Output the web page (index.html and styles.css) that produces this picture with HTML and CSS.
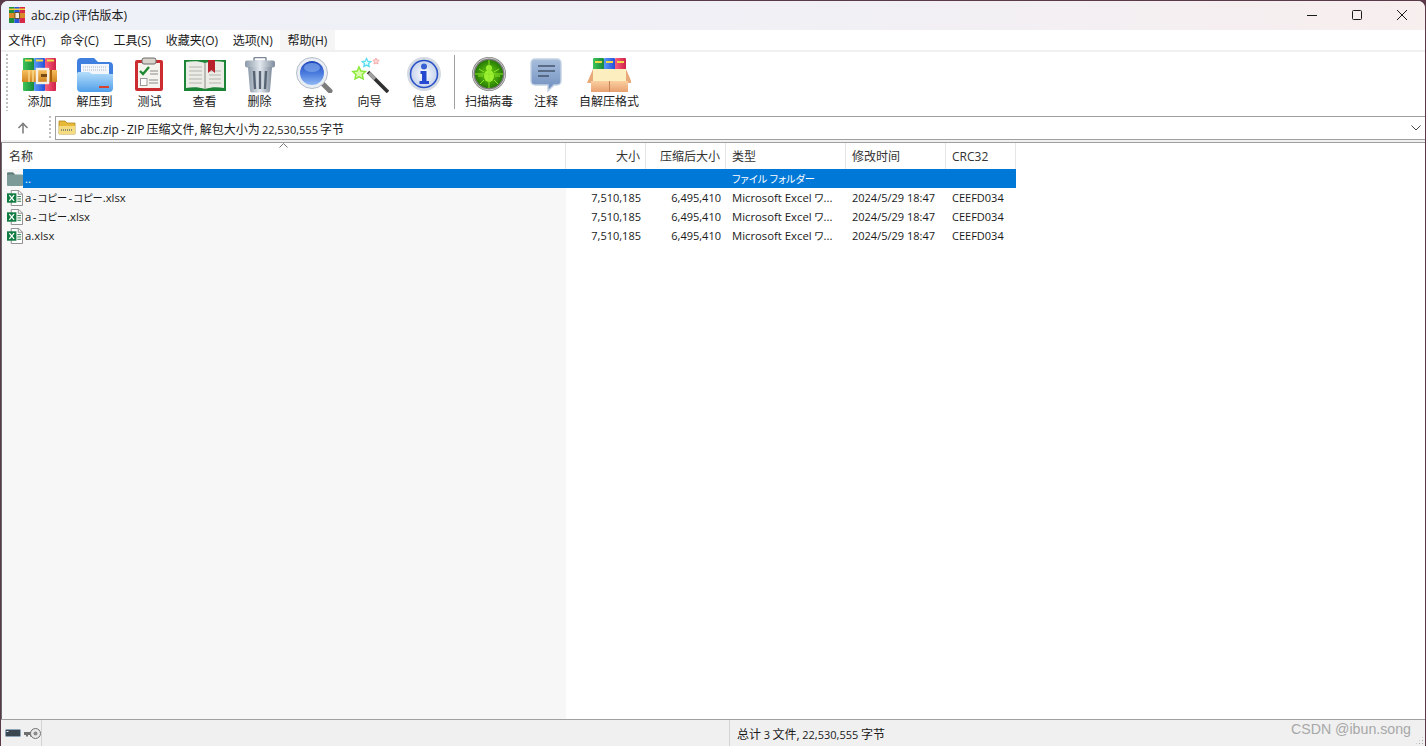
FILE: index.html
```html
<!DOCTYPE html>
<html lang="zh">

<head>
    <meta charset="UTF-8">
    <meta name="viewport" content="width=device-width, initial-scale=1.0">
    <title>abc.zip (评估版本)</title>
    <link rel="stylesheet" href="styles.css">
</head>

<body>
    <!-- shared gradients for the toolbar icons -->
    <svg class="svg-defs" aria-hidden="true">
        <defs>
            <linearGradient id="g-green" x1="0" x2="1" y1="0" y2="0"><stop offset="0" stop-color="#3cc45a"/><stop offset="1" stop-color="#1a8a3c"/></linearGradient>
            <linearGradient id="g-blue" x1="0" x2="1" y1="0" y2="0"><stop offset="0" stop-color="#5a9af8"/><stop offset="1" stop-color="#2450d8"/></linearGradient>
            <linearGradient id="g-red" x1="0" x2="1" y1="0" y2="0"><stop offset="0" stop-color="#f86080"/><stop offset="1" stop-color="#d02048"/></linearGradient>
            <linearGradient id="g-belt" x1="0" x2="0" y1="0" y2="1"><stop offset="0" stop-color="#f9c060"/><stop offset="1" stop-color="#d08420"/></linearGradient>
            <linearGradient id="g-folder" x1="0" x2="0" y1="0" y2="1"><stop offset="0" stop-color="#b4defa"/><stop offset="1" stop-color="#4f9eea"/></linearGradient>
            <linearGradient id="g-steel" x1="0" x2="1" y1="0" y2="0"><stop offset="0" stop-color="#8b99a8"/><stop offset=".5" stop-color="#e2e8ee"/><stop offset="1" stop-color="#7f8c9c"/></linearGradient>
            <linearGradient id="g-lens" x1="0" x2="0" y1="0" y2="1"><stop offset="0" stop-color="#1f45b8"/><stop offset=".55" stop-color="#4f80e0"/><stop offset="1" stop-color="#8fb8f4"/></linearGradient>
            <linearGradient id="g-bubble" x1="0" x2="0" y1="0" y2="1"><stop offset="0" stop-color="#a8bedc"/><stop offset="1" stop-color="#6f8fc0"/></linearGradient>
            <linearGradient id="g-box" x1="0" x2="0" y1="0" y2="1"><stop offset="0" stop-color="#fbcfa0"/><stop offset="1" stop-color="#e8a070"/></linearGradient>
            <radialGradient id="g-virus"><stop offset="0" stop-color="#6ed80e"/><stop offset="1" stop-color="#267a06"/></radialGradient>
            <radialGradient id="g-info"><stop offset="0" stop-color="#ffffff"/><stop offset="1" stop-color="#c4d2ec"/></radialGradient>
        </defs>
    </svg>

    <div class="window">
        <div class="titlebar">
            <svg class="title-icon" width="16" height="16" viewBox="0 0 16 16">
                <rect x="0" y="0" width="5.4" height="16" fill="#1f8f3c"/>
                <rect x="5.4" y="0" width="5.2" height="16" fill="#2a55d8"/>
                <rect x="10.6" y="0" width="5.4" height="16" fill="#d8284a"/>
                <rect x="0" y="1.5" width="16" height="1.5" fill="#f0d040"/>
                <rect x="0" y="6" width="16" height="5" fill="#d88a28"/>
                <rect x="6" y="5.5" width="4.5" height="6" fill="#f4ead8" stroke="#5a3a14" stroke-width=".8"/>
            </svg>
            <span class="title-text">abc.zip (评估版本)</span>
            <div class="window-btns">
                <svg width="12" height="12" viewBox="0 0 12 12"><path d="M1 6.500h10" stroke="#1a1a1a" fill="none"/></svg>
                <svg width="12" height="12" viewBox="0 0 12 12"><rect x="1.500" y="1.500" width="9" height="9" rx="1" stroke="#1a1a1a" fill="none"/></svg>
                <svg width="12" height="12" viewBox="0 0 12 12"><path d="M1 1l10 10M11 1L1 11" stroke="#1a1a1a" fill="none"/></svg>
            </div>
        </div>

        <div class="menubar">
            <a>文件(F)</a>
            <a>命令(C)</a>
            <a>工具(S)</a>
            <a>收藏夹(O)</a>
            <a>选项(N)</a>
            <a class="menu-active">帮助(H)</a>
        </div>

        <div class="toolbar">
            <div class="grip"></div>
            <div class="tool">
                <svg width="36" height="36" viewBox="0 0 36 36">
                    <rect x="1" y="1" width="11" height="33" rx="1" fill="url(#g-green)"/>
                    <rect x="12" y="1" width="11" height="33" rx="1" fill="url(#g-blue)"/>
                    <rect x="23" y="1" width="11" height="33" rx="1" fill="url(#g-red)"/>
                    <path d="M3 3.500h7M14 3.500h7M25 3.500h7" stroke="#f0d848" stroke-width="2"/>
                    <rect x="0" y="13" width="35" height="12" fill="url(#g-belt)"/>
                    <path d="M7 13v12M11 13v12" stroke="#f9dc90" stroke-width="1.400"/>
                    <rect x="15" y="12" width="11" height="14" fill="none" stroke="#f6f0e4" stroke-width="2.400"/>
                    <rect x="19" y="17" width="6" height="3" fill="#7a4a14"/>
                    <rect x="28" y="13" width="2" height="12" fill="#a8620f"/>
                </svg>
                <span>添加</span>
            </div>
            <div class="tool">
                <svg width="36" height="36" viewBox="0 0 36 36">
                    <path d="M0 5a4 4 0 0 1 4-4h13l4 4h11a4 4 0 0 1 4 4v12H0z" fill="#3f7fe0"/>
                    <rect x="4" y="7" width="28" height="14" fill="#f2f5fa"/>
                    <path d="M6 10h24M6 13h24" stroke="#a8b8cc" stroke-dasharray="1 1"/>
                    <path d="M0 17c0-1.500 1-2 2-2h10l3 2h21v14a4 4 0 0 1-4 4H4a4 4 0 0 1-4-4z" fill="url(#g-folder)"/>
                    <rect x="22" y="29" width="10" height="2" fill="#d84030"/>
                </svg>
                <span>解压到</span>
            </div>
            <div class="tool">
                <svg width="30" height="36" viewBox="0 0 30 36">
                    <rect x="0" y="3" width="28" height="31" rx="2" fill="#cc2c30"/>
                    <rect x="3" y="6" width="22" height="25" fill="#f6f4ee"/>
                    <rect x="7" y="1" width="14" height="6" rx="2" fill="#d8d4cc" stroke="#6a6a6a"/>
                    <path d="M5 14l3 3 6-7" stroke="#1f8a30" stroke-width="2.400" fill="none"/>
                    <path d="M15 14h8M15 17h8M14 23h9M14 26h9" stroke="#8a8a8a"/>
                    <rect x="5.500" y="21.500" width="6.500" height="7" fill="#fff" stroke="#9a9a9a"/>
                </svg>
                <span>测试</span>
            </div>
            <div class="tool">
                <svg width="42" height="36" viewBox="0 0 42 36">
                    <rect x="0" y="3" width="42" height="31" fill="#1c8436"/>
                    <path d="M2 5c6-1 13-1 19 1c6-2 13-2 19-1v26c-6-1-13-1-19 1c-6-2-13-2-19-1z" fill="#ecece6"/>
                    <path d="M5 10h13M5 14h13M5 18h13M5 22h13M5 26h13M25 14h12M25 18h12M25 22h12M25 26h12" stroke="#b4b4ae" stroke-width="1.200"/>
                    <path d="M21 6v26" stroke="#8a8a84"/>
                    <path d="M24 3h7v13l-3.500-3-3.500 3z" fill="#b8202c"/>
                </svg>
                <span>查看</span>
            </div>
            <div class="tool">
                <svg width="30" height="36" viewBox="0 0 30 36">
                    <rect x="9" y="0.500" width="12" height="4" rx="1" fill="none" stroke="#7a8898" stroke-width="1.400"/>
                    <rect x="0" y="3.500" width="30" height="7" rx="2" fill="url(#g-steel)"/>
                    <path d="M3 10h24l-2 24a2 2 0 0 1-2 1.500H7a2 2 0 0 1-2-1.500z" fill="url(#g-steel)"/>
                    <path d="M9 14l1 18M15 14v18M21 14l-1 18" stroke="#566474" stroke-width="2.400"/>
                </svg>
                <span>删除</span>
            </div>
            <div class="tool">
                <svg width="38" height="36" viewBox="0 0 38 36">
                    <path d="M24 24l10 10" stroke="#7c7c7c" stroke-width="5" stroke-linecap="round"/>
                    <circle cx="16" cy="16" r="15.500" fill="#e8eef4" stroke="#b4bec8"/>
                    <circle cx="16" cy="16" r="12" fill="url(#g-lens)"/>
                    <ellipse cx="16" cy="10.500" rx="8" ry="4.500" fill="#7ea8ec" opacity=".7"/>
                </svg>
                <span>查找</span>
            </div>
            <div class="tool">
                <svg width="38" height="36" viewBox="0 0 38 36">
                    <path d="M17 15l20 20" stroke="#303030" stroke-width="3.600"/>
                    <path d="M18 16l6 6" stroke="#a0a0a0" stroke-width="3.200"/>
                    <path d="M8 10l2 4 4.500.5-3.200 3 .9 4.500L8 19.800 4 22l.9-4.500-3.200-3 4.500-.5z" fill="#d8fca8" stroke="#86e838" stroke-width="1.400"/>
                    <path d="M15.500 1.500l1.300 2.700 3 .4-2.200 2 .6 3-2.700-1.500-2.700 1.500.6-3-2.200-2 3-.4z" fill="#e4fdff" stroke="#58dcf0" stroke-width="1.300"/>
                    <path d="M25 1l1 2 2.200.3-1.600 1.500.4 2.200-2-1-2 1 .4-2.200-1.600-1.500 2.200-.3z" fill="#fbd8d8" stroke="#f4acac"/>
                </svg>
                <span>向导</span>
            </div>
            <div class="tool">
                <svg width="36" height="36" viewBox="0 0 36 36">
                    <circle cx="17" cy="17" r="17" fill="#d4dae2"/>
                    <circle cx="17" cy="17" r="13.500" fill="url(#g-info)" stroke="#2a50c8" stroke-width="1.600"/>
                    <circle cx="17" cy="9.500" r="3" fill="#3a62d4"/>
                    <path d="M13.500 14h6v10H22v3h-9.500v-3H15v-7h-1.500z" fill="#2448d0"/>
                </svg>
                <span>信息</span>
            </div>
            <div class="tool-sep"></div>
            <div class="tool tool-wide">
                <svg width="36" height="36" viewBox="0 0 36 36">
                    <circle cx="18" cy="17" r="17" fill="#7c7c7c"/>
                    <circle cx="18" cy="17" r="16" fill="none" stroke="#d0d0d0"/>
                    <circle cx="18" cy="17" r="14" fill="url(#g-virus)"/>
                    <ellipse cx="18" cy="19" rx="5" ry="6" fill="#9cf030"/>
                    <circle cx="18" cy="11" r="3" fill="#9cf030"/>
                    <path d="M13 15l-5-3M23 15l5-3M12 19H7M24 19h5M13 23l-4 4M23 23l4 4M18 3v28M4 17h28" stroke="#8ce428" stroke-width="1"/>
                </svg>
                <span>扫描病毒</span>
            </div>
            <div class="tool tool-note">
                <svg width="32" height="36" viewBox="0 0 32 36">
                    <path d="M5 2h22a4 4 0 0 1 4 4v18a4 4 0 0 1-4 4h-3l-6 6v-6H5a4 4 0 0 1-4-4V6a4 4 0 0 1 4-4z" fill="url(#g-bubble)" stroke="#c4d2e4" stroke-width="1.400"/>
                    <path d="M8 9h17M8 14h17M8 19h11" stroke="#46566c" stroke-width="1.600"/>
                </svg>
                <span>注释</span>
            </div>
            <div class="tool tool-sfx">
                <svg width="44" height="36" viewBox="0 0 44 36">
                    <rect x="6" y="1" width="11" height="14" rx="1" fill="url(#g-green)"/>
                    <rect x="17" y="1" width="11" height="14" rx="1" fill="url(#g-blue)"/>
                    <rect x="28" y="1" width="11" height="14" rx="1" fill="url(#g-red)"/>
                    <path d="M8 5h7M19 5h7M30 5h7" stroke="#f0d848" stroke-width="2"/>
                    <rect x="6" y="12" width="33" height="12" fill="#fdeec0"/>
                    <path d="M6 12L0 26h6z M39 12l6 14h-6z" fill="#e8a878"/>
                    <rect x="4" y="24" width="37" height="11" fill="url(#g-box)"/>
                    <path d="M22.500 24v11" stroke="#c88254"/>
                </svg>
                <span>自解压格式</span>
            </div>
        </div>

        <div class="addressbar">
            <div class="up-btn">
                <svg width="12" height="12" viewBox="0 0 12 12"><path d="M6 11.500V1.500M1.500 6L6 1.500 10.500 6" stroke="#808080" stroke-width="1.600" fill="none"/></svg>
            </div>
            <div class="grip grip-small"></div>
            <div class="address-box">
                <svg width="18" height="16" viewBox="0 0 18 16">
                    <path d="M1 1h6l2 2h8v11H1z" fill="#e8b838" stroke="#b08820" stroke-width=".8"/>
                    <rect x="1" y="6" width="16" height="8" fill="#f6dc80"/>
                    <path d="M3 10h12" stroke="#8a8a7a" stroke-width="2" stroke-dasharray="1 1"/>
                </svg>
                <span class="address-text">abc.zip - ZIP 压缩文件, 解包大小为 <span class="digits">22,530,555</span> 字节</span>
                <svg class="chevron" width="10" height="6" viewBox="0 0 10 6"><path d="M.5.500L5 5 9.500.500" stroke="#444" fill="none"/></svg>
            </div>
        </div>

        <div class="list">
            <div class="row list-head">
                <div class="col col-name">名称<svg class="sort-mark" width="9" height="5" viewBox="0 0 9 5"><path d="M.5 4.500L4.500.5l4 4" stroke="#777" fill="none"/></svg></div>
                <div class="col col-num">大小</div>
                <div class="col col-num">压缩后大小</div>
                <div class="col col-type">类型</div>
                <div class="col col-time">修改时间</div>
                <div class="col col-crc">CRC32</div>
            </div>
            <div class="row row-selected">
                <div class="col col-name">
                    <svg class="file-icon" width="16" height="14" viewBox="0 0 16 14"><path d="M0 1.500A1 1 0 0 1 1 .5h5l2 2h7a1 1 0 0 1 1 1V13a1 1 0 0 1-1 1H1a1 1 0 0 1-1-1z" fill="#7b9a98"/><path d="M0 1.500A1 1 0 0 1 1 .5h5l2 2H0z" fill="#5f7a78"/></svg>
                    <span>..</span>
                </div>
                <div class="col col-num"></div>
                <div class="col col-num"></div>
                <div class="col col-type"><span class="kana">ファイル フォルダー</span></div>
                <div class="col col-time"></div>
                <div class="col col-crc"></div>
            </div>
            <div class="row">
                <div class="col col-name">
                    <svg class="file-icon" width="16" height="16" viewBox="0 0 17 17"><use href="#xls-icon"/></svg>
                    <span class="file-name">a - <span class="kana">コピー</span> - <span class="kana">コピー</span>.xlsx</span>
                </div>
                <div class="col col-num">7,510,185</div>
                <div class="col col-num">6,495,410</div>
                <div class="col col-type">Microsoft Excel <span class="kana">ワ</span>...</div>
                <div class="col col-time">2024/5/29 18:47</div>
                <div class="col col-crc">CEEFD034</div>
            </div>
            <div class="row">
                <div class="col col-name">
                    <svg class="file-icon" width="16" height="16" viewBox="0 0 17 17"><use href="#xls-icon"/></svg>
                    <span class="file-name">a - <span class="kana">コピー</span>.xlsx</span>
                </div>
                <div class="col col-num">7,510,185</div>
                <div class="col col-num">6,495,410</div>
                <div class="col col-type">Microsoft Excel <span class="kana">ワ</span>...</div>
                <div class="col col-time">2024/5/29 18:47</div>
                <div class="col col-crc">CEEFD034</div>
            </div>
            <div class="row">
                <div class="col col-name">
                    <svg class="file-icon" width="16" height="16" viewBox="0 0 17 17">
                        <g id="xls-icon">
                            <path d="M4.500.5h8l4 4v12h-12z" fill="#fff" stroke="#8a8a8a"/>
                            <path d="M12 .5v4h4.500" fill="none" stroke="#8a8a8a"/>
                            <path d="M11 7h4M11 9.500h4M11 12h4" stroke="#2a7a4a"/>
                            <rect x="0" y="3.500" width="10" height="10" fill="#107c41"/>
                            <path d="M2.500 5.500l5 6M7.500 5.500l-5 6" stroke="#fff" stroke-width="1.400"/>
                        </g>
                    </svg>
                    <span>a.xlsx</span>
                </div>
                <div class="col col-num">7,510,185</div>
                <div class="col col-num">6,495,410</div>
                <div class="col col-type">Microsoft Excel <span class="kana">ワ</span>...</div>
                <div class="col col-time">2024/5/29 18:47</div>
                <div class="col col-crc">CEEFD034</div>
            </div>
        </div>

        <div class="statusbar">
            <div class="status-left">
                <svg width="16" height="8" viewBox="0 0 16 8"><rect x=".5" y=".5" width="15" height="7" rx="1" fill="#3c4650" stroke="#8aa4b8"/><rect x="1.500" y="2" width="2" height="1" fill="#dfe8ee"/></svg>
                <svg width="17" height="11" viewBox="0 0 17 11"><path d="M0 4h11v3H8v1.500H6V7H4v1.500H2V7H0z" fill="#707070"/><circle cx="11.500" cy="5.500" r="5" fill="#e8e8e8" stroke="#707070"/><circle cx="11.500" cy="5.500" r="2" fill="#8a8a8a"/></svg>
            </div>
            <div class="status-mid"></div>
            <div class="status-right">总计 <span class="digits">3</span> 文件, <span class="digits">22,530,555</span> 字节</div>
            <div class="watermark">CSDN @ibun.song</div>
            <div class="size-grip"></div>
        </div>
    </div>
</body>

</html>
```

FILE: styles.css
```css
html {
    background-color: #5a3a48;
}

body {
    margin: 0;
    padding: 0;
    font-family: "Open Sans", "Noto Sans CJK SC", sans-serif;
    font-size: 12px;
    color: #1a1a1a;
}

.svg-defs {
    position: absolute;
    width: 0;
    height: 0;
}

.kana {
    font-family: "Noto Sans CJK JP", sans-serif;
    font-feature-settings: "palt";
    font-size: 10.200px;
}

.digits {
    font-size: 11px;
}

.window {
    display: flex;
    flex-direction: column;
    height: 745px;
    margin: 1px 1px 0 1px;
    border-radius: 7px 7px 0 0;
    overflow: hidden;
    background-color: #f0f0f0;
}

.titlebar {
    display: flex;
    align-items: center;
    flex: 0 0 29px;
    box-sizing: border-box;
    padding: 0 0 2px 8px;
    background: linear-gradient(to right, #eef1f8, #f0f0f5 55%, #f7eeee);
}

.title-icon {
    margin-right: 6px;
}

.title-text {
    word-spacing: -1px;
}

.window-btns {
    display: flex;
    gap: 33px;
    margin-left: auto;
    padding-right: 17px;
}

.menubar {
    display: flex;
    flex: 0 0 20px;
    background-color: #fff;
}

.menubar a {
    padding: 1px 7.300px 0;
    height: 19px;
    line-height: 19px;
    white-space: nowrap;
}

.menu-active {
    background-color: #f5f5f5;
}

.toolbar {
    display: flex;
    flex: 0 0 65px;
    padding-left: 5px;
    border-top: 2px solid #f0f0f0;
    background-color: #fff;
    box-sizing: border-box;
}

.grip {
    width: 2px;
    margin: 2px 4px 4px 0;
    background: repeating-linear-gradient(to bottom, #c0c0c0 0, #c0c0c0 2px, transparent 2px, transparent 4px);
}

.tool {
    display: flex;
    flex-direction: column;
    align-items: center;
    width: 55px;
    padding-top: 5px;
    flex: none;
}

.tool svg {
    flex: none;
}

.tool span {
    line-height: 18px;
    white-space: nowrap;
    color: #222;
}

.tool-sep {
    width: 1px;
    height: 54px;
    margin: 3px 1px 0 2px;
    background-color: #a0a0a0;
}

.tool-wide {
    width: 66px;
}

.tool-note {
    width: 48px;
}

.tool-sfx {
    width: 78px;
}

.addressbar {
    display: flex;
    flex: 0 0 25px;
    box-sizing: border-box;
    background-color: #fff;
}

.up-btn {
    display: flex;
    align-items: center;
    justify-content: center;
    width: 44px;
}

.grip-small {
    margin: 1px 4px 1px 4px;
}

.address-box {
    display: flex;
    align-items: center;
    flex: 1;
    margin-top: 1px;
    padding-left: 2px;
    border: 1px solid #a0a0a0;
    border-width: 1px 0 1px 1px;
}

.address-text {
    margin: 2px 0 0 4px;
    word-spacing: -1px;
}

.chevron {
    margin-left: auto;
    margin-right: 4px;
}

.list {
    flex: 1;
    margin-top: 2px;
    border-top: 1px solid #a0a0a0;
    border-left: 1px solid #6a6a6a;
    background: linear-gradient(to right, #f7f7f7 564px, #fff 564px);
}

.row {
    display: flex;
    width: 1014px;
    height: 19px;
    line-height: 19px;
    white-space: nowrap;
}

.list-head {
    position: relative;
    height: 26px;
    line-height: 26px;
    background-color: #fff;
    color: #333;
}

.list-head .col {
    padding-top: 1px;
    border-right: 1px solid #e6e6e6;
    font-size: 12px;
}

.row-selected {
    background: linear-gradient(to right, transparent 21px, #0078d7 21px);
    color: #fff;
}

.col {
    flex: none;
    overflow: hidden;
    box-sizing: border-box;
}

.col-name {
    display: flex;
    align-items: center;
    width: 564px;
    padding-left: 5px;
    font-size: 11.300px;
}

.list-head .col-name {
    padding-left: 7px;
}

.file-name {
    word-spacing: -1.500px;
}

.sort-mark {
    position: absolute;
    left: 277px;
    top: 0;
}

.file-icon {
    flex: none;
    margin-right: 2px;
}

.col-num {
    width: 80px;
    padding-right: 5px;
    text-align: right;
    font-size: 11px;
}

.col-type {
    width: 120px;
    padding-left: 6px;
    font-size: 11.300px;
}

.col-time {
    width: 100px;
    padding-left: 6px;
    font-size: 11px;
}

.col-crc {
    width: 70px;
    padding-left: 6px;
    font-size: 11px;
}

.statusbar {
    position: relative;
    display: flex;
    align-items: center;
    flex: 0 0 27px;
    border-top: 1px solid #a0a0a0;
    box-sizing: border-box;
    background-color: #f0f0f0;
}

.status-left {
    display: flex;
    align-items: center;
    gap: 3px;
    width: 41px;
    height: 100%;
    padding-left: 4px;
    box-sizing: border-box;
    border-right: 1px solid #d4d4d4;
}

.status-mid {
    width: 688px;
    height: 100%;
    box-sizing: border-box;
    border-right: 1px solid #d4d4d4;
}

.status-right {
    padding: 2px 0 0 7px;
    word-spacing: -.500px;
}

.watermark {
    position: absolute;
    right: 14px;
    top: -1px;
    font-family: "Liberation Sans", sans-serif;
    font-size: 14.200px;
    line-height: 20px;
    color: #a8a8a8;
}

.size-grip {
    position: absolute;
    right: 1px;
    bottom: 1px;
    width: 9px;
    height: 9px;
    background: radial-gradient(circle, #a8a8a8 1px, transparent 1px) 0 0 / 3px 3px;
    clip-path: polygon(100% 0, 100% 100%, 0 100%);
}
```
